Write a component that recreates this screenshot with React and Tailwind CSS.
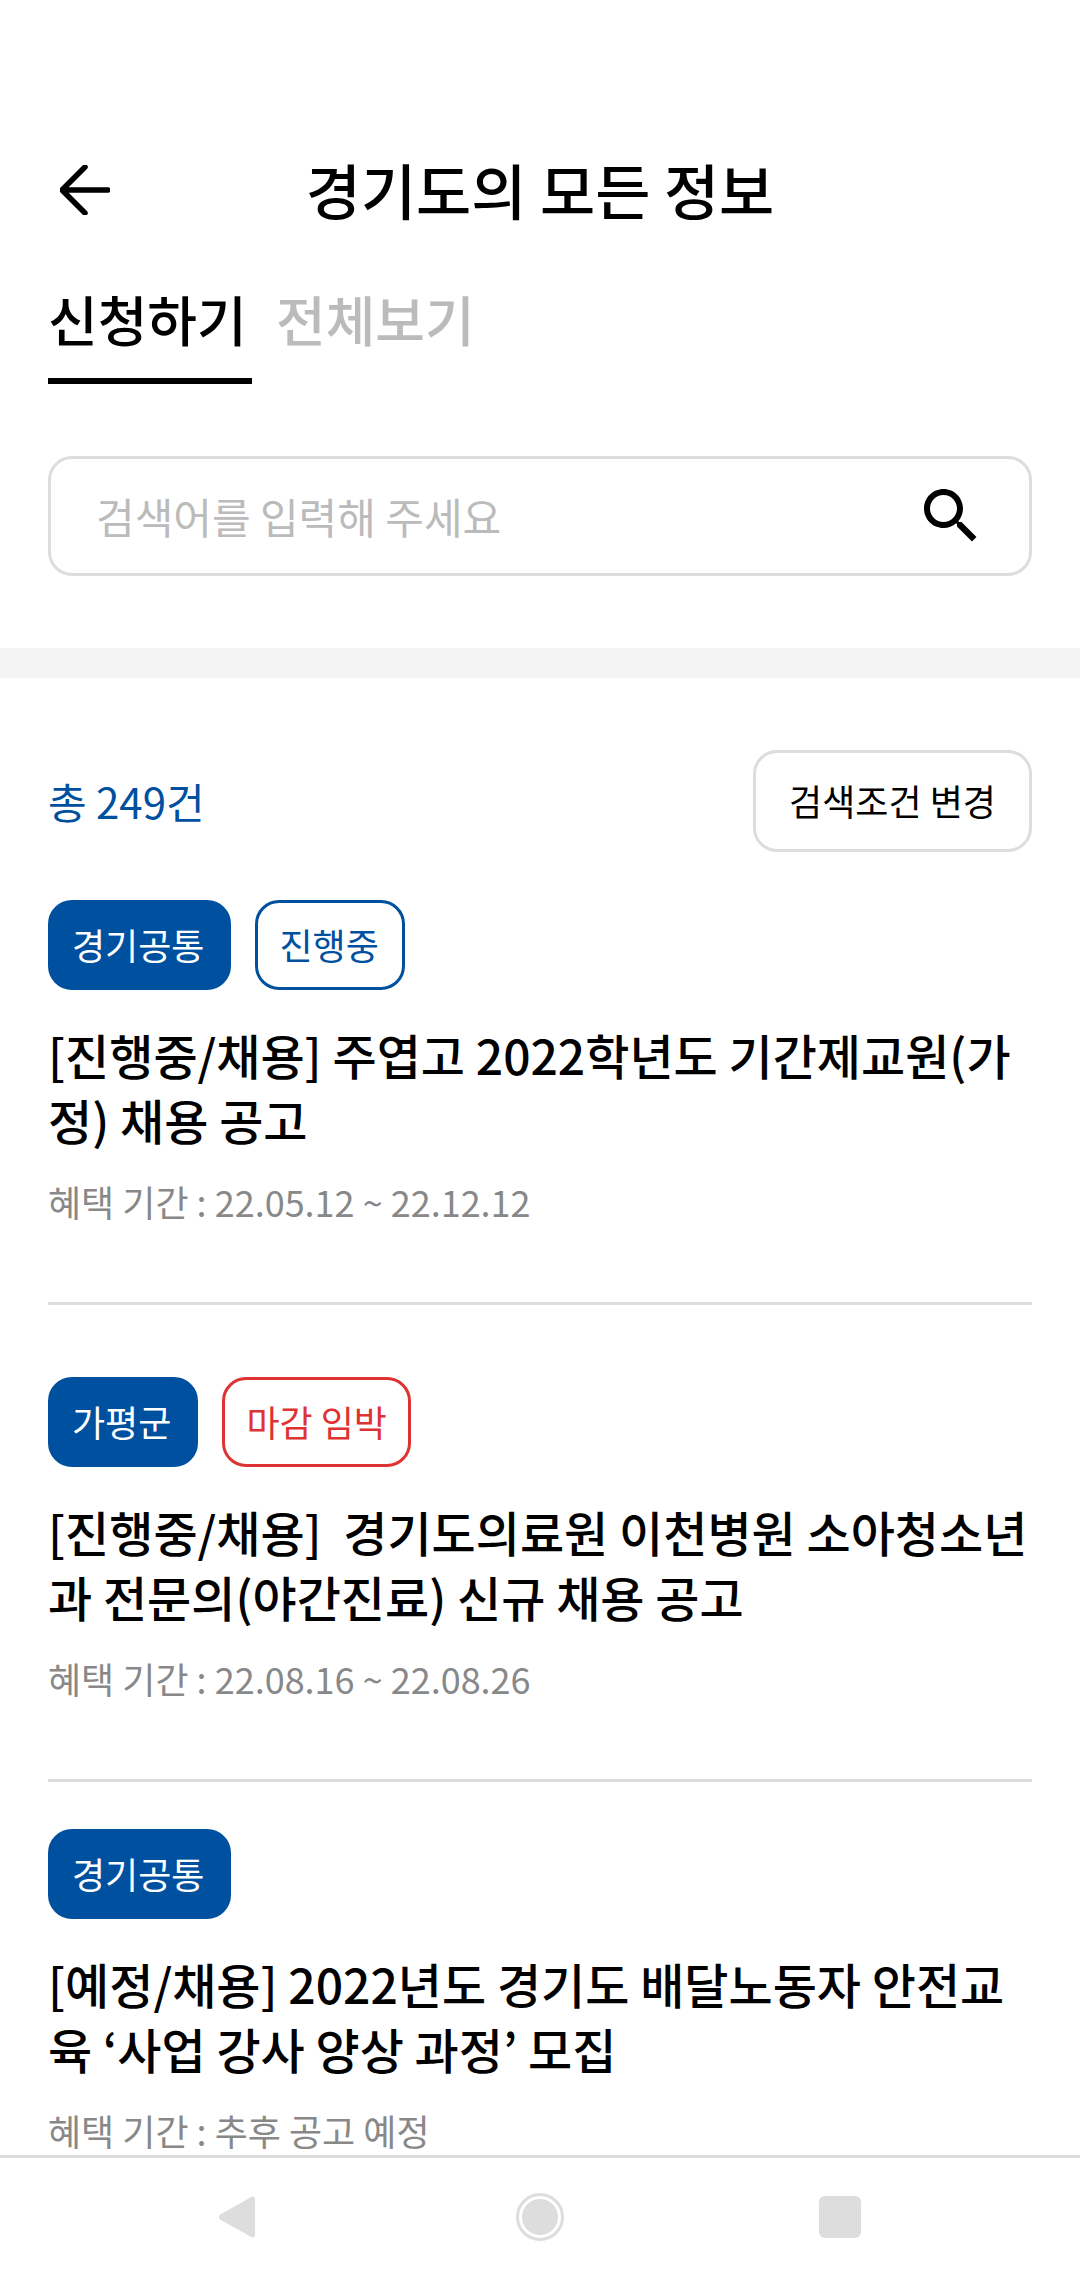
const FONT = "font-['Noto_Sans_CJK_KR','Noto_Sans',sans-serif]";

const posts = [
  {
    tags: [
      { label: '경기공통', kind: 'solid' },
      { label: '진행중', kind: 'blue' },
    ],
    title: '[진행중/채용] 주엽고 2022학년도 기간제교원(가정) 채용 공고',
    period: '혜택 기간 : 22.05.12 ~ 22.12.12',
    top: 'pt-[48px]',
  },
  {
    tags: [
      { label: '가평군', kind: 'solid' },
      { label: '마감 임박', kind: 'red' },
    ],
    title: '[진행중/채용]\u00a0 경기도의료원 이천병원 소아청소년과 전문의(야간진료) 신규 채용 공고',
    period: '혜택 기간 : 22.08.16 ~ 22.08.26',
    top: 'pt-[72px]',
  },
  {
    tags: [{ label: '경기공통', kind: 'solid' }],
    title: '[예정/채용] 2022년도 경기도 배달노동자 안전교육 ‘사업 강사 양상 과정’ 모집',
    period: '혜택 기간 : 추후 공고 예정',
    top: 'pt-[47px]',
  },
];

const tagStyles = {
  solid: 'bg-[#0050a0] text-white border-[#0050a0] pr-[24px]',
  blue: 'bg-white text-[#0050a0] border-[#0050a0] pr-[23px]',
  red: 'bg-white text-[#dd3333] border-[#dd3333] pr-[21px]',
};

const Tag = ({ label, kind }) => (
  <span className={`flex h-[90px] items-center rounded-[24px] border-[3px] pb-[2px] pl-[21px] text-[36px] leading-none ${tagStyles[kind]}`}>
    {label}
  </span>
);

const Post = ({ post, last }) => (
  <div className={`${post.top} ${last ? '' : 'border-b-[3px] border-[#dddddd] pb-[74px]'}`}>
    <div className="flex gap-6">
      {post.tags.map((tag) => (
        <Tag key={tag.label} {...tag} />
      ))}
    </div>
    <h3 className="mt-[32px] text-[48px] leading-[65px] font-medium text-black">{post.title}</h3>
    <p className="mt-[22px] text-[36px] leading-[54px] text-[#888888]">{post.period}</p>
  </div>
);

const App = () => {
  return (
    <div className={`flex h-[2280px] w-[1080px] flex-col overflow-hidden bg-white ${FONT}`}>
      <main className="min-h-0 flex-1 overflow-hidden">
        <header className="relative mt-[140px] flex h-[100px] items-center justify-center">
          <svg className="absolute top-[25px] left-[60px] h-[50px] w-[50px]" viewBox="0 0 50 50" fill="none" stroke="black" strokeWidth="5.5" strokeLinecap="round" strokeLinejoin="round">
            <path d="M2 25H48M25 2L2 25L25 48" />
          </svg>
          <h1 className="pb-[2px] text-[60px] leading-[98px] font-medium text-black">경기도의 모든 정보</h1>
        </header>

        <div className="mt-[20px] flex gap-6 px-12">
          <div className="h-[124px] w-[204px] border-b-[6px] border-black text-[54px] leading-[118px] font-medium text-black">신청하기</div>
          <div className="h-[124px] w-[204px] text-[54px] leading-[118px] font-medium text-[#bbbbbb]">전체보기</div>
        </div>

        <div className="mx-12 mt-[72px] flex h-[120px] items-center justify-between rounded-[24px] border-[3px] border-[#dddddd] pr-[42px] pl-[45px]">
          <span className="pb-[2px] text-[42px] text-[#bbbbbb]">검색어를 입력해 주세요</span>
          <svg className="h-[72px] w-[72px]" viewBox="0 0 24 24" fill="black">
            <path d="M15.5 14h-.79l-.28-.27C15.41 12.59 16 11.11 16 9.5 16 5.91 13.09 3 9.5 3S3 5.91 3 9.5 5.91 16 9.5 16c1.61 0 3.09-.59 4.23-1.57l.27.28v.79l5 4.99L20.49 19l-4.99-5zm-6 0C7.01 14 5 11.99 5 9.5S7.01 5 9.5 5 14 7.01 14 9.5 11.99 14 9.5 14z" />
          </svg>
        </div>

        <div className="mt-[72px] h-[30px] bg-[#f4f4f4]" />

        <section className="px-12 pt-[72px]">
          <div className="flex items-center justify-between">
            <span className="pb-[2px] text-[42px] text-[#0050a0]">총 249건</span>
            <button className="flex h-[102px] w-[279px] items-center justify-center rounded-[24px] border-[3px] border-[#dddddd] pb-[2px] text-[36px] text-black">
              검색조건 변경
            </button>
          </div>
          {posts.map((post, i) => (
            <Post key={post.title} post={post} last={i === posts.length - 1} />
          ))}
        </section>
      </main>

      <nav className="flex h-[125px] shrink-0 items-center border-t-[3px] border-[#dddddd] bg-white pb-1 pl-[219px]">
        <svg className="h-[42px] w-[36px]" viewBox="0 0 36 42" fill="#dddddd">
          <path d="M33 0.5C35 0.5 36 1.5 36 3V39C36 40.5 35 41.5 33.5 41.5C32.5 41.5 32 41 31.5 40.5L1 23.5C-0.3 22 -0.3 20 1 18.5L31.5 1.5C32 1 32.5 0.5 33 0.5Z" />
        </svg>
        <svg className="ml-[261px] h-[48px] w-[48px]" viewBox="0 0 48 48">
          <circle cx="24" cy="24" r="22.5" fill="none" stroke="#dddddd" strokeWidth="3" />
          <circle cx="24" cy="24" r="18" fill="#dddddd" />
        </svg>
        <div className="ml-[255px] h-[42px] w-[42px] rounded-[6px] bg-[#dddddd]" />
      </nav>
    </div>
  );
};

export default App;
